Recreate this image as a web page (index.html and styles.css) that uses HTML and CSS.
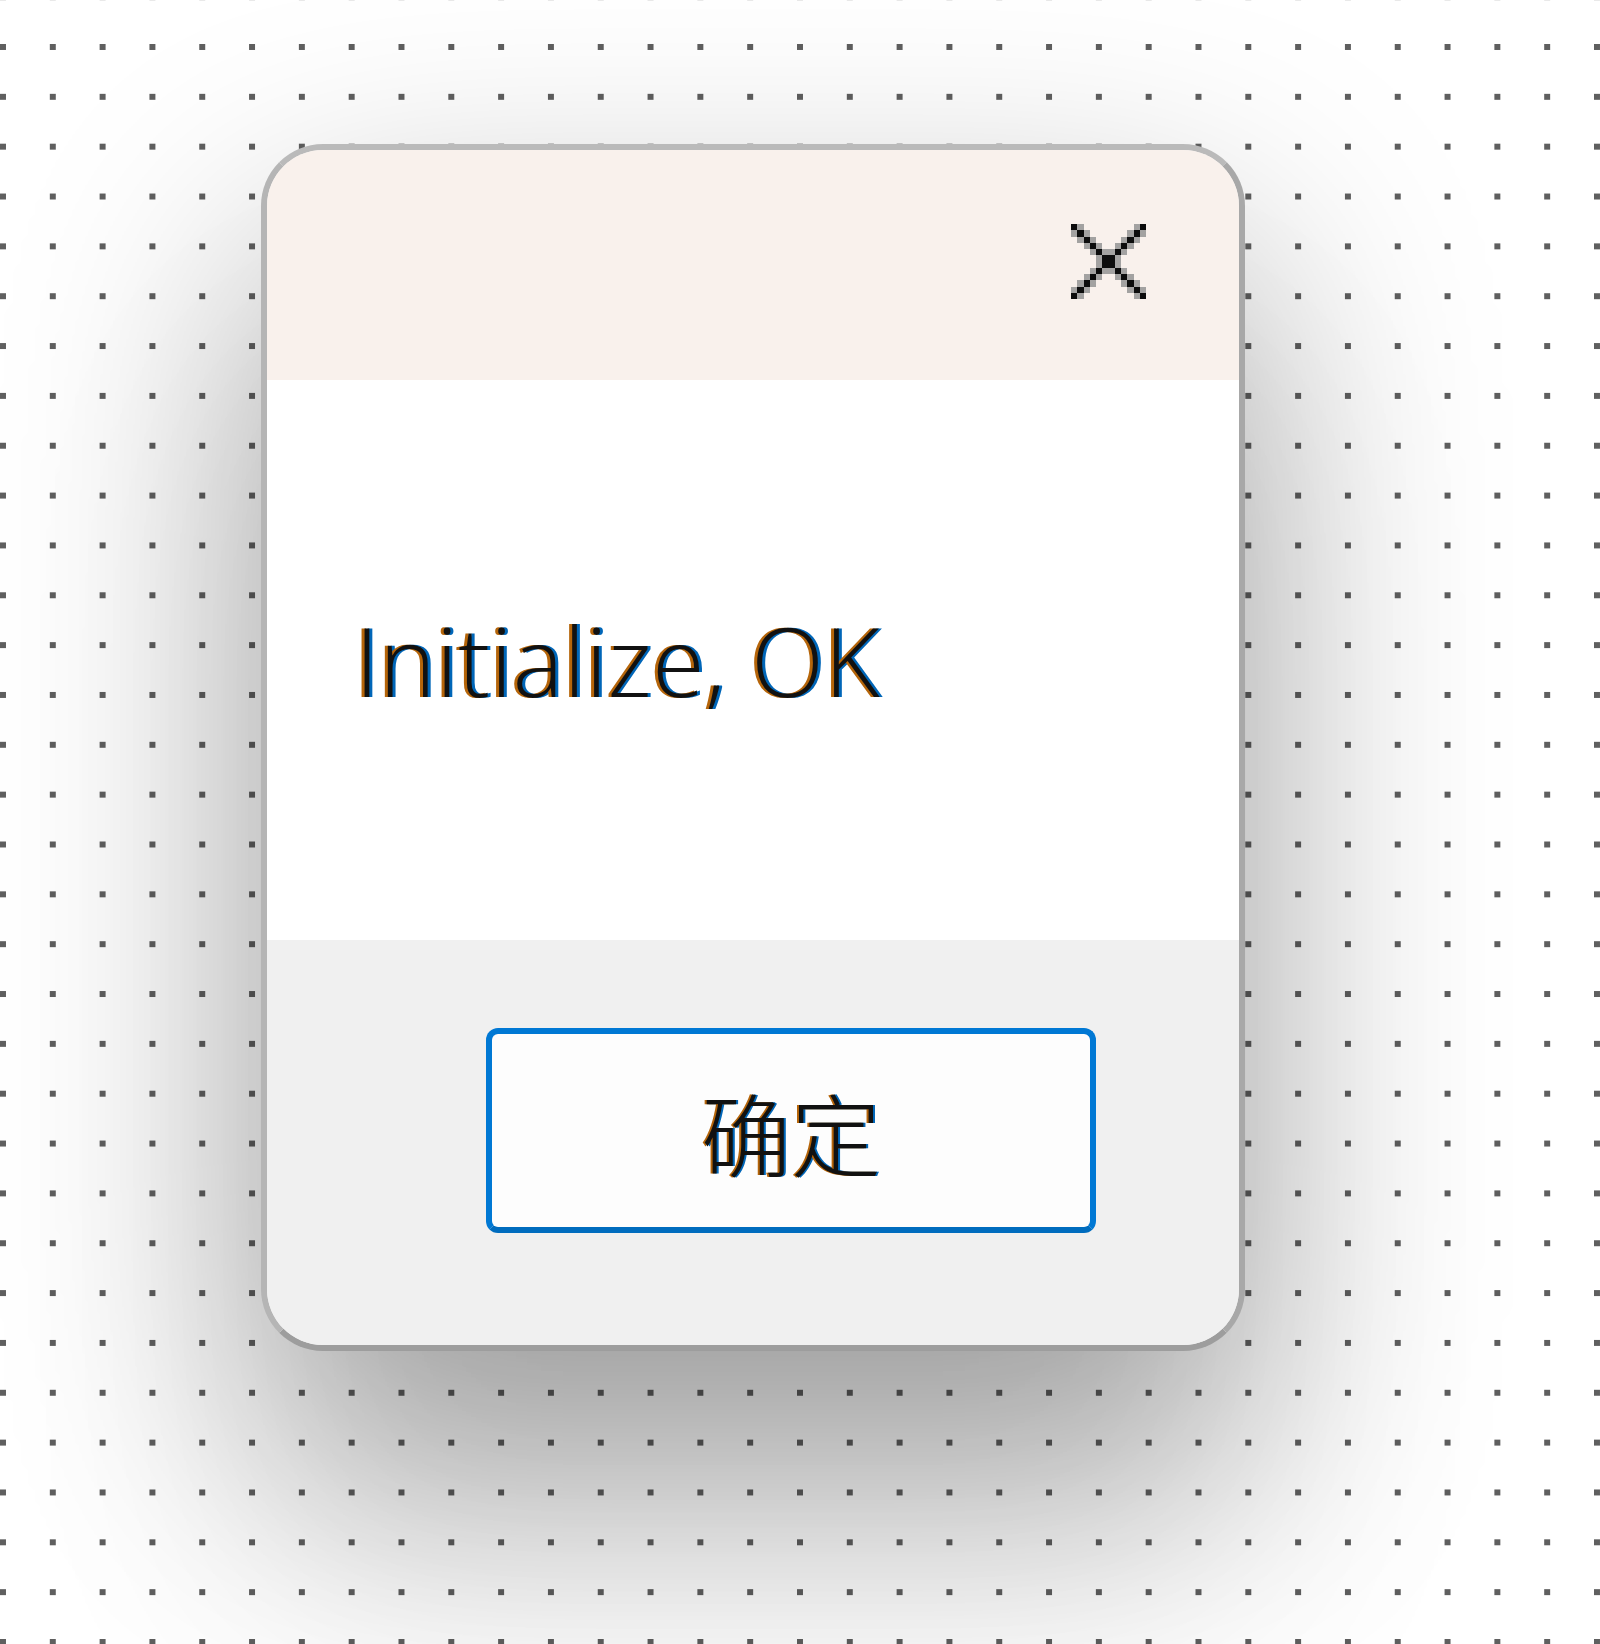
FILE: index.html
```html
<!DOCTYPE html>
<html lang="zh-CN">
<head>
<meta charset="utf-8">
<title>Initialize</title>
<link rel="stylesheet" href="styles.css">
</head>
<body>
<div class="desk">
  <div class="dialog">
    <div class="dialog-head">
      <button class="close" aria-label="Close">
        <svg class="close-icon" viewBox="0 0 12 12" width="75" height="75" shape-rendering="crispEdges">
          <path fill="#a3a2a1" d="M1 0h1v1H1z M10 0h1v1h-1z M0 1h1v1H0z M2 1h1v1H2z M9 1h1v1H9z M11 1h1v1h-1z M1 2h1v1H1z M3 2h1v1H3z M8 2h1v1H8z M10 2h1v1h-1z M2 3h1v1H2z M4 3h1v1H4z M7 3h1v1H7z M9 3h1v1H9z M3 4h1v1H3z M5 4h2v1H5z M8 4h1v1H8z M4 5h1v2H4z M7 5h1v2H7z M3 7h1v1H3z M5 7h2v1H5z M8 7h1v1H8z M2 8h1v1H2z M4 8h1v1H4z M7 8h1v1H7z M9 8h1v1H9z M1 9h1v1H1z M3 9h1v1H3z M8 9h1v1H8z M10 9h1v1h-1z M0 10h1v1H0z M2 10h1v1H2z M9 10h1v1H9z M11 10h1v1h-1z M1 11h1v1H1z M10 11h1v1h-1z"/>
          <path fill="#0c0c0c" d="M0 0h1v1H0z M11 0h1v1h-1z M1 1h1v1H1z M10 1h1v1h-1z M2 2h1v1H2z M9 2h1v1H9z M3 3h1v1H3z M8 3h1v1H8z M4 4h1v1H4z M7 4h1v1H7z M5 5h2v2H5z M4 7h1v1H4z M7 7h1v1H7z M3 8h1v1H3z M8 8h1v1H8z M2 9h1v1H2z M9 9h1v1H9z M1 10h1v1H1z M10 10h1v1h-1z M0 11h1v1H0z M11 11h1v1h-1z"/>
        </svg>
      </button>
    </div>
    <div class="dialog-body">
      <p class="message">Initialize, OK</p>
    </div>
    <div class="dialog-foot">
      <button class="ok-btn">确定</button>
    </div>
  </div>
</div>
</body>
</html>
```

FILE: styles.css
```css
html, body {
  margin: 0;
  padding: 0;
}

body {
  width: 1600px;
  height: 1644px;
  overflow: hidden;
  background-color: #ffffff;
  background-image: conic-gradient(from 270deg at 6px 6px, #5f5f5f 25%, transparent 0);
  background-size: 49.82px 49.85px;
  background-position: 0 44px;
}

.desk {
  padding: 144px 0 0 261px;
}

.dialog {
  width: 984px;
  height: 1207px;
  box-sizing: border-box;
  border: 6px solid;
  border-color: #bababa #a8a8a8 #9d9d9d #b5b5b5;
  border-radius: 62px;
  overflow: hidden;
  display: flex;
  flex-direction: column;
  background: #f0f0f0;
  box-shadow: 0 105px 316px rgba(0, 0, 0, 0.33), 0 240px 300px rgba(0, 0, 0, 0.1);
}

.dialog-head {
  height: 230px;
  flex: none;
  background: #f9f1ec;
  display: flex;
  justify-content: flex-end;
  align-items: flex-start;
  padding: 74px 93px 0 0;
  box-sizing: border-box;
}

.close {
  border: 0;
  padding: 0;
  margin: 0;
  background: transparent;
  width: 75px;
  height: 75px;
  display: block;
}

.close-icon {
  display: block;
}

.dialog-body {
  height: 560px;
  flex: none;
  background: #ffffff;
  display: flex;
  align-items: center;
  padding-left: 88px;
  box-sizing: border-box;
}

.message {
  margin: 0;
  font-family: "Open Sans", "Noto Sans", sans-serif;
  font-weight: 300;
  font-size: 95px;
  line-height: 1;
  letter-spacing: 0.6px;
  color: #111;
  text-shadow: -3px 0 0 #b5650a, 3px 0 0 #0066b8;
}

.dialog-foot {
  flex: 1;
  background: #f0f0f0;
  padding: 88px 0 0 219px;
}

.ok-btn {
  width: 610px;
  height: 205px;
  box-sizing: border-box;
  border: 6px solid #0078d4;
  border-bottom-color: #006cbe;
  border-radius: 12px;
  background: #fdfdfd;
  padding: 0;
  margin: 0;
  display: flex;
  align-items: center;
  justify-content: center;
  font-family: "Noto Sans CJK SC", "Noto Sans", sans-serif;
  font-weight: 300;
  font-size: 90px;
  line-height: 1;
  color: #111;
  text-shadow: -2px 0 0 #b5650a, 2px 0 0 #0066b8;
}
```
